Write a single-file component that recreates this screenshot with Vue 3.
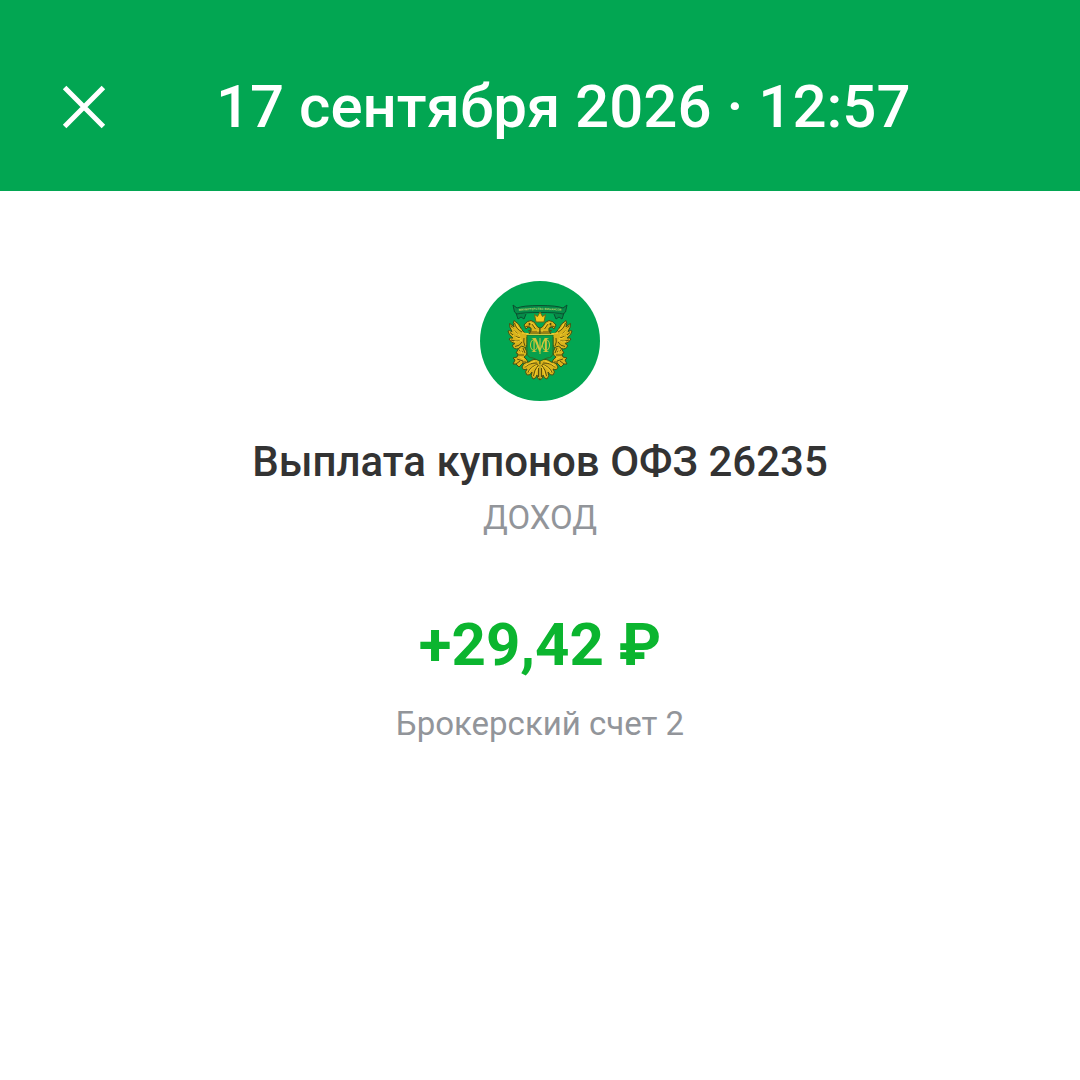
<template>
  <div class="screen">
    <header class="topbar">
      <button class="close" type="button" aria-label="Закрыть">
        <svg viewBox="0 0 48 48" aria-hidden="true">
          <path d="M4.6 4.6 43.4 43.4M43.4 4.6 4.6 43.4" />
        </svg>
      </button>
      <h1>{{ operation.date }} · {{ operation.time }}</h1>
    </header>

    <main class="operation">
      <svg class="emblem" viewBox="0 0 120 120" aria-hidden="true">
        <defs>
          <path id="ribbon-line" d="M30 31Q44 29 60 29T90 31" />
          <!-- left half of the eagle, mirrored for the right one -->
          <g id="eagle-half">
            <!-- wing -->
            <path class="gold" d="M60 54H50Q44 53 42 49Q39 42 34 39.500Q32.500 42 34 46Q31 43 29.500 42.500Q29 46 32 50.500Q29 49 28 50Q28.500 54 33 57Q30 56.500 29 58Q31 62 35 62.500Q32 63.500 32.500 65Q34 69 39 67.500L40 69.500Q45 69 47 64V56L60 55Z" />
            <path class="dark" d="M34.500 42Q36 48 42 51M31 44.500Q34 51 39 54M30 51.500Q34 56 40 57M31 59Q36 61 40 60M35 65.500Q40 65 42 61M44 57Q43 61 45 65" />
            <path class="light" d="M36 42.500Q37 47 42 49.500M32 46.500Q35 53 40 54.500M33 54Q37 58 41 58M34 60.500Q38 62 42 59M42 52Q48 53 55 52.500" />
            <!-- head and neck -->
            <path class="gold" d="M44 44Q47 39.500 51 39.500Q55 40.500 56.500 44.500Q58 47 60 47V53H49Q52 50 51 47L48 46L46 48Z" />
            <path class="dark" d="M45.500 45.500 50 45M52 43 55.500 48M49 51H60M51 49 48 50" />
            <path class="light" d="M50 41.500Q54 42 56 47M58 49V51" />
            <circle class="eye" cx="49.500" cy="43" r="1" />
            <!-- side figure -->
            <path class="gold" d="M39 67Q41 64 44.500 66L47 71Q47 75 44 76L47 79Q49 82 47 84L43 82L39 86L36 83L33 83L35 79L33 77L37 76L38 73L36 72Z" />
            <path class="dark" d="M39 69 43 71M38 74 44 74M37 78 43 80M36 83 40 80M43 67 45 72M42 81 46 81" />
            <path class="light" d="M40 68 42 72M40 76 44 78" />
            <!-- tail -->
            <path class="gold" d="M60 79Q53 77 49 81Q44 81 42 86Q43 90 47 88Q44 91 47 94Q50 95 52 91Q50 95 53 98Q56 98 57 94Q57 98 60 99Z" />
            <path class="dark" d="M57 82Q48 82 45 86.500M58 83Q50 86 48 91.500M58.500 84Q54 89 53.500 95M58.500 87V96" />
            <path class="light" d="M55 80Q49 82 45 85M57 84Q51 87 49 91M58 86Q56 90 55 95M60 83V97" />
          </g>
        </defs>

        <circle class="disc" cx="60" cy="60" r="60" />
        <use href="#eagle-half" />
        <use href="#eagle-half" transform="matrix(-1 0 0 1 120 0)" />

        <path class="ribbon" d="M36 32 38 38 41 36 44 38 46 33M84 32 82 38 79 36 76 38 74 33" />
        <path class="ribbon" d="M33 24 37 27Q43 24.500 60 24.500T83 27L87 24L85.500 31L83 33Q77 31.500 60 31.500T37 33L34.500 31Z" />
        <text class="motto">
          <textPath href="#ribbon-line" startOffset="50%">МИНИСТЕРСТВО ФИНАНСОВ</textPath>
        </text>

        <path class="crown" d="M56 41 54.500 33.500 57.500 35.500 60 31 62.500 35.500 65.500 33.500 64 41Z" />

        <path class="shield" d="M47 54H73V71Q73 77 67 77L60 80L53 77Q47 77 47 71Z" />
        <path class="gold-line" d="M46 53.500H74" />
        <text class="monogram" x="60" y="71">М</text>
        <path class="gold-line" d="M60 57V73" />
        <ellipse class="gold-line" cx="54" cy="64" rx="3.500" ry="5.500" />
        <ellipse class="gold-line" cx="66" cy="64" rx="3.500" ry="5.500" />
      </svg>

      <h2>{{ operation.title }}</h2>
      <p class="kind">{{ operation.kind }}</p>
      <p class="amount">{{ operation.amount }}</p>
      <p class="account">{{ operation.account }}</p>
    </main>
  </div>
</template>

<script setup>
const operation = {
  date: '17 сентября 2026',
  time: '12:57',
  title: 'Выплата купонов ОФЗ 26235',
  kind: 'ДОХОД',
  amount: '+29,42 ₽',
  account: 'Брокерский счет 2'
};
</script>

<style>
body {
  background: #fff;
}
</style>

<style scoped>
* {
  box-sizing: border-box;
}

.screen {
  font-family: Roboto, "Noto Sans", sans-serif;
  color: #333;
}

h1,
h2,
p {
  margin: 0;
}

.topbar {
  display: flex;
  align-items: center;
  gap: 108px;
  padding: 71px 60px 48px;
  background: #02a652;
  color: #fff;
}

.close {
  flex: none;
  width: 48px;
  height: 48px;
  padding: 0;
  border: 0;
  background: none;
  color: inherit;
  cursor: pointer;
}

.close svg {
  display: block;
  fill: none;
  stroke: currentColor;
  stroke-width: 5;
}

h1 {
  font-size: 60px;
  font-weight: 500;
  line-height: 72px;
}

.operation {
  display: flex;
  flex-direction: column;
  align-items: center;
  padding: 90px 60px;
  text-align: center;
}

.emblem {
  width: 120px;
  height: 120px;
  margin-bottom: 37px;
}

h2 {
  font-size: 42px;
  font-weight: 500;
  line-height: 48px;
}

.kind,
.account {
  color: #92959a;
  font-size: 33px;
  line-height: 40px;
}

.kind {
  margin-top: 12px;
}

.amount {
  margin: 71px 0 23px;
  color: #0bb52f;
  font-size: 60px;
  font-weight: 700;
  line-height: 72px;
}

.disc {
  fill: #02a652;
}

.gold {
  fill: #d9b31c;
  stroke: #3f5215;
  stroke-width: 1;
  stroke-linejoin: round;
}

.dark {
  fill: none;
  stroke: #5c4f0c;
  stroke-width: 1;
}

.light {
  fill: none;
  stroke: #f5cf2e;
  stroke-width: 1;
}

.eye {
  fill: #3f4410;
}

.ribbon {
  fill: #078a48;
  stroke: #0b5030;
  stroke-width: 1;
}

.motto {
  fill: #b4d465;
  font-size: 3px;
  font-weight: 700;
  text-anchor: middle;
}

.crown {
  fill: #f3c81d;
  stroke: #6b6a14;
  stroke-width: 1;
}

.shield {
  fill: #08a04c;
  stroke: #2f6a20;
  stroke-width: 1;
}

.gold-line {
  fill: none;
  stroke: #d2c83a;
  stroke-width: 1;
}

.monogram {
  fill: #d2c83a;
  font-family: "Liberation Serif", serif;
  font-size: 20px;
  text-anchor: middle;
}
</style>
